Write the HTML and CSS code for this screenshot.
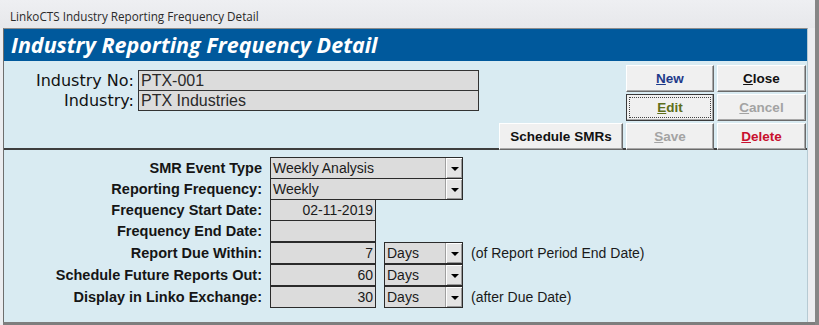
FILE: index.html
```html
<!DOCTYPE html>
<html lang="en">
<head>
    <meta charset="UTF-8">
    <title>LinkoCTS Industry Reporting Frequency Detail</title>
    <link rel="stylesheet" href="styles.css">
</head>
<body>

<div class="screen">
    <div class="window">
        <div class="titlebar">LinkoCTS Industry Reporting Frequency Detail</div>

        <div class="form">
            <div class="form-header">
                <h1>Industry Reporting Frequency Detail</h1>
            </div>

            <!-- Industry identification + command buttons -->
            <div class="top-panel">
                <div class="ident">
                    <label>Industry No:</label>
                    <div class="field">PTX-001</div>
                    <label>Industry:</label>
                    <div class="field">PTX Industries</div>
                </div>

                <div class="actions">
                    <span></span>
                    <button class="btn btn-new"><u>N</u>ew</button>
                    <button class="btn"><u>C</u>lose</button>
                    <span></span>
                    <button class="btn btn-edit"><span class="focus"><u>E</u>dit</span></button>
                    <button class="btn" disabled><u>C</u>ancel</button>
                    <button class="btn">Schedule SMRs</button>
                    <button class="btn" disabled><u>S</u>ave</button>
                    <button class="btn btn-delete"><u>D</u>elete</button>
                </div>
            </div>

            <!-- Frequency details -->
            <div class="detail">
                <label>SMR Event Type</label>
                <div class="cell">
                    <div class="combo combo-long">Weekly Analysis<span class="drop"></span></div>
                </div>

                <label>Reporting Frequency:</label>
                <div class="cell">
                    <div class="combo combo-long">Weekly<span class="drop"></span></div>
                </div>

                <label>Frequency Start Date:</label>
                <div class="cell">
                    <div class="box num">02-11-2019</div>
                </div>

                <label>Frequency End Date:</label>
                <div class="cell">
                    <div class="box num"></div>
                </div>

                <label>Report Due Within:</label>
                <div class="cell">
                    <div class="box num">7</div>
                    <div class="combo combo-unit">Days<span class="drop"></span></div>
                    <span class="note">(of Report Period End Date)</span>
                </div>

                <label>Schedule Future Reports Out:</label>
                <div class="cell">
                    <div class="box num">60</div>
                    <div class="combo combo-unit">Days<span class="drop"></span></div>
                </div>

                <label>Display in Linko Exchange:</label>
                <div class="cell">
                    <div class="box num">30</div>
                    <div class="combo combo-unit">Days<span class="drop"></span></div>
                    <span class="note">(after Due Date)</span>
                </div>
            </div>
        </div>
        <div class="window-bottom"></div>
    </div>
    <div class="edge"></div>
</div>

</body>
</html>
```

FILE: styles.css
```css
/* General Reset */
* {
    margin: 0;
    padding: 0;
    box-sizing: border-box;
}
body {
    font-family: 'Liberation Sans', Arial, sans-serif;
    background-color: #ECEDF0; /* Window Gray */
    color: #111;
    width: 819px;
    height: 325px;
    overflow: hidden;
}

.screen {
    display: flex;
    height: 325px;
}
.window {
    width: 815px;
    display: flex;
    flex-direction: column;
}
.edge {
    width: 4px;
    background-color: #868686;
}
.window-bottom {
    height: 3px;
    margin-left: 3px;
    background-color: #7E7E7E;
}

/* Title Bar */
.titlebar {
    height: 28px;
    padding-left: 10px;
    padding-top: 8px;
    font-family: 'Open Sans', 'Noto Sans', sans-serif;
    font-size: 11.7px;
    color: #2a2a2a;
    background: linear-gradient(#EEEFF2, #E7E8EB);
}

/* Form Frame */
.form {
    margin-left: 3px;
    width: 805px;
    flex: 1;
    display: flex;
    flex-direction: column;
    background-color: #D9EBF2; /* Light Blue */
    border-left: 1px solid #6E6E6E;
    border-right: 1px solid #B6CAD3;
    border-top: 1px solid #8C8C8C;
}
.form-header {
    height: 32px;
    background-color: #00599C; /* Header Blue */
    padding-left: 7px;
}
.form-header h1 {
    font-family: 'Open Sans', 'Noto Sans', sans-serif;
    font-style: italic;
    font-weight: 700;
    font-size: 21.5px;
    line-height: 32px;
    color: #fff;
}

/* Top Panel */
.top-panel {
    height: 89px;
    display: flex;
    justify-content: space-between;
    padding-top: 4px;
    padding-right: 1px;
    border-bottom: 2px solid #3E3E3E;
}
.ident {
    display: grid;
    grid-template-columns: 130px 341px;
    grid-template-rows: 20px 21px;
    column-gap: 4px;
    margin-top: 5px;
    align-self: flex-start;
}
.ident label {
    font-family: 'DejaVu Sans', sans-serif;
    font-size: 16px;
    text-align: right;
    line-height: 22px;
    color: #111;
}
.field {
    height: 21px;
    background-color: #DCDCDC;
    border: 1px solid #333;
    font-size: 16px;
    line-height: 19px;
    padding-left: 2px;
    color: #2a2a2a;
}

/* Command Buttons */
.actions {
    display: grid;
    grid-template-columns: 124px 88px 89px;
    grid-template-rows: 27px 27px 27px;
    column-gap: 3px;
    row-gap: 2px;
}
.btn {
    font-family: 'Liberation Sans', Arial, sans-serif;
    font-weight: 700;
    font-size: 13.5px;
    color: #111;
    background-color: #F0F0F0;
    border: 1px solid;
    border-color: #fff #6A6A6A #6A6A6A #fff;
    box-shadow: inset -1px -1px 0 #A8A8A8;
    cursor: pointer;
}
.btn:disabled {
    color: #A3A3A3;
    cursor: default;
}
.btn-new {
    color: #1E3A8A; /* Navy */
}
.btn-delete {
    color: #C8102E; /* Red */
}
.btn-edit {
    color: #5E6E1B; /* Olive */
    border: 1px solid #3A3A3A;
    padding: 2px;
}
.btn-edit .focus {
    display: block;
    height: 100%;
    line-height: 19px;
    border: 1px dotted #444;
}

/* Detail Grid */
.detail {
    display: grid;
    grid-template-columns: 258px auto;
    grid-template-rows: 21px 21px 21px 22px 22px 22px 22px;
    column-gap: 8px;
    padding-top: 7px;
}
.detail label {
    font-weight: 700;
    font-size: 14.5px;
    text-align: right;
    line-height: 22px;
    color: #151515;
}
.cell {
    display: flex;
    align-items: flex-start;
}
.box,
.combo {
    height: 22px;
    background-color: #DCDCDC;
    border: 1px solid #2B2B2B;
    font-size: 14px;
    line-height: 20px;
    color: #1A1A1A;
}
.num {
    width: 106px;
    text-align: right;
    padding-right: 2px;
}
.combo {
    position: relative;
    padding-left: 2px;
}
.combo-long {
    width: 193px;
}
.combo-unit {
    width: 79px;
    margin-left: 8px;
}
.drop {
    position: absolute;
    top: 0;
    right: 0;
    width: 17px;
    height: 20px;
    background-color: #E4E4E4;
    border-left: 1px solid #A0A0A0;
    box-shadow: inset 1px 1px 0 #fff, inset -1px -1px 0 #9A9A9A;
}
.drop::after {
    content: "";
    position: absolute;
    left: 5px;
    top: 9px;
    border-left: 4px solid transparent;
    border-right: 4px solid transparent;
    border-top: 4px solid #000;
}
.note {
    margin-left: 8px;
    font-size: 14px;
    line-height: 22px;
    color: #1A1A1A;
}
```
